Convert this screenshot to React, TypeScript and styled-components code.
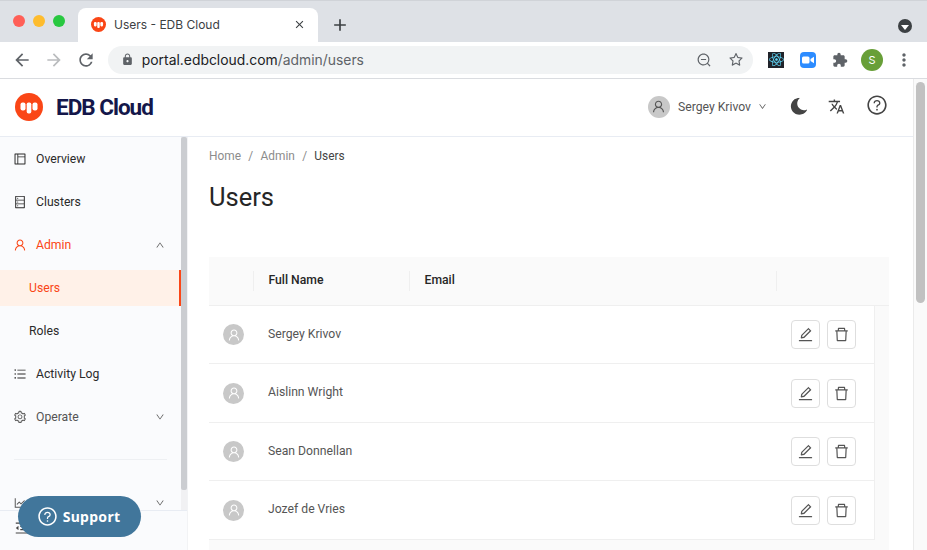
import React from 'react'
import styled, { createGlobalStyle } from 'styled-components'
import {
  AiOutlineDatabase,
  AiOutlineDelete,
  AiOutlineDown,
  AiOutlineEdit,
  AiOutlineLayout,
  AiOutlineLineChart,
  AiOutlineMenuFold,
  AiOutlineQuestionCircle,
  AiOutlineSetting,
  AiOutlineStar,
  AiOutlineUnorderedList,
  AiOutlineUp,
  AiOutlineUser,
  AiOutlineZoomOut,
} from 'react-icons/ai'
import { FaMoon, FaReact } from 'react-icons/fa'
import {
  MdAdd,
  MdArrowBack,
  MdArrowForward,
  MdClose,
  MdExtension,
  MdLock,
  MdMoreVert,
  MdOutlineTranslate,
  MdRefresh,
} from 'react-icons/md'

const uiFont = `Roboto, "Noto Sans", sans-serif`
const chromeFont = `Inter, "Liberation Sans", sans-serif`
const accent = '#fa4616'

const GlobalStyle = createGlobalStyle`
  html, body {
    margin: 0;
    padding: 0;
    height: 100%;
    overflow: hidden;
    background: #fff;
  }
  * { box-sizing: border-box; }
`

const Window = styled.div`
  width: 927px;
  height: 550px;
  display: flex;
  flex-direction: column;
  overflow: hidden;
  font-family: ${uiFont};
`

/* browser chrome */
const TabStrip = styled.div`
  height: 42px;
  flex: none;
  background: #dee1e6;
  display: flex;
  align-items: flex-end;
  padding: 0 15px 0 13px;
  border-top: 1px solid #d0d3d8;
`
const Lights = styled.div`
  display: flex;
  gap: 8px;
  align-self: flex-start;
  margin-top: 14px;
  width: 65px;
`
const Light = styled.span<{ $color: string }>`
  width: 12px;
  height: 12px;
  border-radius: 50%;
  background: ${(p) => p.$color};
`
const Tab = styled.div`
  width: 240px;
  height: 34px;
  background: #fff;
  border-radius: 8px 8px 0 0;
  display: flex;
  align-items: center;
  padding: 0 12px 2px 13px;
  font: 12px ${chromeFont};
  color: #3c4043;
`
const TabTitle = styled.span`
  margin-left: 8px;
  flex: 1;
`
const NewTab = styled.div`
  display: flex;
  margin: 0 0 7px 12px;
  color: #3c4043;
  font-size: 20px;
`
const StripEnd = styled.div`
  margin: 0 0 9px auto;
  width: 14px;
  height: 14px;
  border-radius: 50%;
  background: #3c4043;
  display: flex;
  align-items: center;
  justify-content: center;
  &::after {
    content: '';
    margin-top: 2px;
    border-left: 4px solid transparent;
    border-right: 4px solid transparent;
    border-top: 5px solid #fff;
  }
`
const Toolbar = styled.div`
  height: 37px;
  flex: none;
  background: #fff;
  border-bottom: 1px solid #dadce0;
  display: flex;
  align-items: center;
  padding: 0 13px 1px 12px;
  color: #5f6368;
`
const NavIcons = styled.div`
  display: flex;
  gap: 12px;
  font-size: 20px;
  width: 96px;
`
const Faded = styled.span`
  display: flex;
  color: #babcbe;
`
const Plain = styled.span`
  display: flex;
`
const Omnibox = styled.div`
  width: 647px;
  height: 28px;
  border-radius: 14px;
  background: #f1f3f4;
  display: flex;
  align-items: center;
  padding: 0 9px 0 13px;
  font: 13.9px ${chromeFont};
`
const Url = styled.span`
  margin-left: 8px;
  flex: 1;
  color: #5f6368;
  b {
    font-weight: 400;
    color: #202124;
  }
`
const OmniIcons = styled.div`
  display: flex;
  gap: 16px;
  font-size: 16px;
  color: #5f6368;
`
const Extensions = styled.div`
  display: flex;
  align-items: center;
  margin-left: 15px;
  gap: 8px;
`
const ExtSlot = styled.span`
  width: 16px;
  height: 16px;
  margin-right: 8px;
  display: flex;
  align-items: center;
  justify-content: center;
`
const ReactExt = styled(ExtSlot)`
  background: #20232a;
  color: #61dafb;
  font-size: 15px;
`
const ZoomExt = styled(ExtSlot)`
  background: #2d8cff;
  border-radius: 4px;
`
const PuzzleExt = styled(ExtSlot)`
  color: #5f6368;
  font-size: 18px;
  margin-right: 5px;
`
const Profile = styled.span`
  width: 22px;
  height: 22px;
  border-radius: 50%;
  background: #689f38;
  color: #fff;
  font: 11px ${chromeFont};
  display: flex;
  align-items: center;
  justify-content: center;
`
const MoreDots = styled.span`
  display: flex;
  margin-left: 3px;
  color: #5f6368;
  font-size: 20px;
`

/* app */
const Viewport = styled.div`
  flex: 1;
  min-height: 0;
  display: flex;
`
const App_ = styled.div`
  flex: 1;
  min-width: 0;
  display: flex;
  flex-direction: column;
  position: relative;
`
const PageScroll = styled.div`
  width: 14px;
  flex: none;
  background: #fafafa;
  border-left: 1px solid #ebebeb;
  padding: 3px 2px 0 2px;
`
const PageThumb = styled.div`
  height: 221px;
  border-radius: 5px;
  background: #c1c1c1;
`
const Header = styled.header`
  height: 58px;
  flex: none;
  display: flex;
  align-items: center;
  padding: 0 25px 2px 15px;
  border-bottom: 1px solid #e8ecf3;
`
const Brand = styled.div`
  margin-left: 13px;
  font-size: 22.5px;
  font-weight: 700;
  color: #14174a;
  letter-spacing: -1px;
  flex: 1;
`
const UserMenu = styled.div`
  display: flex;
  align-items: center;
  font-size: 12.2px;
  font-weight: 400;
  color: #555;
  margin-right: 23px;
`
const UserName = styled.span`
  margin: 0 7px 0 8px;
`
const Avatar = styled.span<{ $size: number }>`
  width: ${(p) => p.$size}px;
  height: ${(p) => p.$size}px;
  border-radius: 50%;
  background: #c8c8c8;
  color: ${(p) => (p.$size > 21 ? '#555' : '#fff')};
  font-size: ${(p) => Math.round(p.$size * 0.68)}px;
  display: flex;
  align-items: center;
  justify-content: center;
`
const HeaderIcons = styled.div`
  display: flex;
  align-items: center;
  gap: 21px;
  color: #444;
`
const Moon = styled.span`
  display: flex;
  font-size: 17px;
  transform: rotate(-12deg);
`
const Translate = styled.span`
  display: flex;
  font-size: 17px;
`
const Help = styled.span`
  display: flex;
  font-size: 22px;
  margin-top: -3px;
`
const Body = styled.div`
  flex: 1;
  min-height: 0;
  display: flex;
`
const Sidebar = styled.aside`
  width: 187px;
  flex: none;
  background: #fafbfd;
  display: flex;
  flex-direction: column;
`
const SideTop = styled.div`
  height: 373px;
  flex: none;
  display: flex;
  overflow: hidden;
`
const Nav = styled.nav`
  width: 181px;
  flex: none;
`
const SideTrack = styled.div`
  flex: 1;
  background: #f1f1f3;
`
const SideThumb = styled.div`
  height: 353px;
  background: #cbcdd1;
  border-radius: 2px;
`
const NavItem = styled.div<{ $active?: boolean; $sub?: boolean; $muted?: boolean }>`
  height: 43px;
  display: flex;
  align-items: center;
  padding: 0 16px 0 ${(p) => (p.$sub ? 29 : 14)}px;
  font-size: 12.2px;
  font-weight: 400;
  color: ${(p) => (p.$active ? accent : p.$muted ? '#555' : '#2a2a2a')};
  svg {
    flex: none;
  }
`
const SelectedItem = styled(NavItem)`
  height: 36px;
  margin: 4px 0 3px;
  background: #fff1e8;
  border-right: 2px solid ${accent};
  padding-right: 12px;
`
const NavIcon = styled.span`
  display: flex;
  font-size: 14px;
  margin-right: 9px;
  margin-left: -1px;
`
const NavLabel = styled.span`
  flex: 1;
`
const Caret = styled.span<{ $end?: boolean }>`
  display: flex;
  font-size: 10px;
  color: #555;
  margin-left: ${(p) => (p.$end ? 'auto' : '0')};
`
const NavDivider = styled.div`
  height: 1px;
  background: #eef0f3;
  margin: 21px 14px 21px;
`
const SideFooter = styled.div`
  flex: 1;
  border-top: 1px solid #e8ecf3;
  padding: 9px 14px;
  font-size: 16px;
  color: #444;
  display: flex;
  align-items: flex-start;
`
const Main = styled.main`
  flex: 1;
  min-width: 0;
  overflow: hidden;
  padding: 10px 24px 0 21px;
  border-left: 1px solid #f2f3f5;
`
const Crumbs = styled.div`
  font-size: 11.9px;
  height: 18px;
  display: flex;
  align-items: center;
  gap: 7.3px;
  color: #8c8c8c;
`
const CrumbNow = styled.span`
  color: #444;
`
const Title = styled.h1`
  margin: 15px 0 43px;
  font-size: 25.5px;
  line-height: 34px;
  font-weight: 400;
  color: #262626;
`
const TableHead = styled.div`
  height: 49px;
  background: #fafafa;
  border-bottom: 1px solid #efefef;
  display: grid;
  grid-template-columns: 44px 156px 367px 1fr;
  align-items: center;
  font-size: 12.2px;
  font-weight: 500;
  color: #262626;
`
const HeadCell = styled.div`
  height: 20px;
  line-height: 19px;
  padding-left: 14.5px;
  border-left: 1px solid #efefef;
`
const HeadBlank = styled.div`
  height: 20px;
`
const Rows = styled.div`
  border-right: 14px solid #fafafa;
`
const Row = styled.div`
  height: 59px;
  display: flex;
  align-items: center;
  padding: 0 18px 0 14px;
  border-bottom: 1px solid #efefef;
  border-right: 1px solid #efefef;
  font-size: 12.2px;
  color: #555;
  &:nth-child(odd) {
    height: 58px;
  }
`
const TableFoot = styled.div`
  height: 20px;
  background: #fafafa;
`
const RowName = styled.span`
  flex: 1;
  margin: -2px 0 0 24px;
`
const Actions = styled.div`
  display: flex;
  gap: 7px;
`
const IconButton = styled.button`
  width: 29px;
  height: 29px;
  padding: 0;
  background: #fff;
  border: 1px solid #dedede;
  border-radius: 4px;
  color: #555;
  font-size: 17px;
  display: flex;
  align-items: center;
  justify-content: center;
`
const Support = styled.button`
  position: absolute;
  left: 18px;
  bottom: 13px;
  width: 123px;
  height: 41px;
  border: 0;
  border-radius: 21px;
  padding: 0 8px 0 6px;
  background: #41769b;
  color: #fff;
  font-family: "Noto Sans", sans-serif;
  font-size: 14px;
  font-weight: 700;
  letter-spacing: 0.3px;
  display: flex;
  align-items: center;
  justify-content: center;
  gap: 5px;
`
const SupportIcon = styled.span`
  display: flex;
  font-size: 21px;
`

const EdbMark: React.FC<{ size: number }> = ({ size }) => (
  <svg width={size} height={size} viewBox="0 0 28 28" style={{ flex: 'none' }}>
    <circle cx="14" cy="14" r="14" fill={accent} />
    <rect x="5.5" y="9.5" width="5" height="8" rx="2" fill="#fff" />
    <rect x="11.7" y="9.5" width="4.6" height="11" rx="1.8" fill="#fff" />
    <rect x="17.5" y="9.5" width="5" height="8" rx="2" fill="#fff" />
  </svg>
)

const people = ['Sergey Krivov', 'Aislinn Wright', 'Sean Donnellan', 'Jozef de Vries']

const App: React.FC = () => {
  return (
    <Window>
      <GlobalStyle />
      <TabStrip>
        <Lights>
          <Light $color="#ff5f57" />
          <Light $color="#febc2e" />
          <Light $color="#28c840" />
        </Lights>
        <Tab>
          <EdbMark size={15} />
          <TabTitle>Users - EDB Cloud</TabTitle>
          <MdClose size={13} />
        </Tab>
        <NewTab>
          <MdAdd />
        </NewTab>
        <StripEnd />
      </TabStrip>
      <Toolbar>
        <NavIcons>
          <Plain>
            <MdArrowBack />
          </Plain>
          <Faded>
            <MdArrowForward />
          </Faded>
          <Plain>
            <MdRefresh />
          </Plain>
        </NavIcons>
        <Omnibox>
          <MdLock size={13} />
          <Url>
            <b>portal.edbcloud.com</b>/admin/users
          </Url>
          <OmniIcons>
            <AiOutlineZoomOut />
            <AiOutlineStar />
          </OmniIcons>
        </Omnibox>
        <Extensions>
          <ReactExt>
            <FaReact />
          </ReactExt>
          <ZoomExt>
            <svg width="12" height="8" viewBox="0 0 12 8">
              <rect x="0" y="0.5" width="7.5" height="7" rx="1.5" fill="#fff" />
              <path d="M8.5 3 L12 0.8 V7.2 L8.5 5 Z" fill="#fff" />
            </svg>
          </ZoomExt>
          <PuzzleExt>
            <MdExtension />
          </PuzzleExt>
          <Profile>S</Profile>
          <MoreDots>
            <MdMoreVert />
          </MoreDots>
        </Extensions>
      </Toolbar>
      <Viewport>
        <App_>
          <Header>
            <EdbMark size={28} />
            <Brand>EDB Cloud</Brand>
            <UserMenu>
              <Avatar $size={22}>
                <AiOutlineUser />
              </Avatar>
              <UserName>Sergey Krivov</UserName>
              <AiOutlineDown size={9} />
            </UserMenu>
            <HeaderIcons>
              <Moon>
                <FaMoon />
              </Moon>
              <Translate>
                <MdOutlineTranslate />
              </Translate>
              <Help>
                <AiOutlineQuestionCircle />
              </Help>
            </HeaderIcons>
          </Header>
          <Body>
            <Sidebar>
              <SideTop>
                <Nav>
                  <NavItem>
                    <NavIcon>
                      <AiOutlineLayout />
                    </NavIcon>
                    <NavLabel>Overview</NavLabel>
                  </NavItem>
                  <NavItem>
                    <NavIcon>
                      <AiOutlineDatabase />
                    </NavIcon>
                    <NavLabel>Clusters</NavLabel>
                  </NavItem>
                  <NavItem $active>
                    <NavIcon>
                      <AiOutlineUser />
                    </NavIcon>
                    <NavLabel>Admin</NavLabel>
                    <Caret>
                      <AiOutlineUp />
                    </Caret>
                  </NavItem>
                  <SelectedItem $active $sub>
                    Users
                  </SelectedItem>
                  <NavItem $sub>Roles</NavItem>
                  <NavItem>
                    <NavIcon>
                      <AiOutlineUnorderedList />
                    </NavIcon>
                    <NavLabel>Activity Log</NavLabel>
                  </NavItem>
                  <NavItem $muted>
                    <NavIcon>
                      <AiOutlineSetting />
                    </NavIcon>
                    <NavLabel>Operate</NavLabel>
                    <Caret>
                      <AiOutlineDown />
                    </Caret>
                  </NavItem>
                  <NavDivider />
                  <NavItem $muted>
                    <NavIcon>
                      <AiOutlineLineChart />
                    </NavIcon>
                    <Caret $end>
                      <AiOutlineDown />
                    </Caret>
                  </NavItem>
                </Nav>
                <SideTrack>
                  <SideThumb />
                </SideTrack>
              </SideTop>
              <SideFooter>
                <AiOutlineMenuFold />
              </SideFooter>
            </Sidebar>
            <Main>
              <Crumbs>
                <span>Home</span>
                <span>/</span>
                <span>Admin</span>
                <span>/</span>
                <CrumbNow>Users</CrumbNow>
              </Crumbs>
              <Title>Users</Title>
              <TableHead>
                <HeadBlank />
                <HeadCell>Full Name</HeadCell>
                <HeadCell>Email</HeadCell>
                <HeadCell />
              </TableHead>
              <Rows>
                {people.map((name) => (
                  <Row key={name}>
                    <Avatar $size={21}>
                      <AiOutlineUser />
                    </Avatar>
                    <RowName>{name}</RowName>
                    <Actions>
                      <IconButton>
                        <AiOutlineEdit />
                      </IconButton>
                      <IconButton>
                        <AiOutlineDelete />
                      </IconButton>
                    </Actions>
                  </Row>
                ))}
              </Rows>
              <TableFoot />
            </Main>
          </Body>
          <Support>
            <SupportIcon>
              <AiOutlineQuestionCircle />
            </SupportIcon>
            Support
          </Support>
        </App_>
        <PageScroll>
          <PageThumb />
        </PageScroll>
      </Viewport>
    </Window>
  )
}

export default App
